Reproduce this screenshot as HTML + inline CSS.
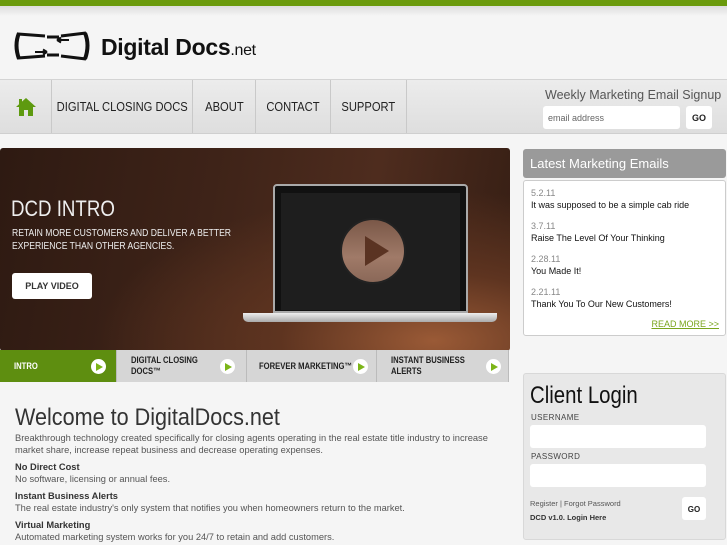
<!DOCTYPE html>
<html><head><meta charset="utf-8"><style>
*{margin:0;padding:0;box-sizing:border-box}
body{width:727px;height:545px;overflow:hidden;background:#f5f5f5;font-family:"Liberation Sans",sans-serif;position:relative}
.a{position:absolute}
.nav{top:79px;left:0;width:727px;height:55px;background:linear-gradient(#ececec,#dedede);border-top:1px solid #d4d4d4;border-bottom:1px solid #cfcfcf}
.nav .c{position:absolute;top:0;height:53px;border-right:1px solid #c9c9c9;font-size:13px;color:#222;display:flex;align-items:center;justify-content:center;white-space:nowrap}
.nav .c span{display:block;transform:scaleX(.86)}
.tab{top:350px;height:32px;background:#d6d6d6;border-right:1px solid #bbb;color:#222;padding:0 0 0 14px;display:flex;align-items:center}
.tab b{display:block;font-size:9px;line-height:11px;transform:scaleX(.85);transform-origin:left;white-space:nowrap}
.pl{position:absolute;top:9px;width:15px;height:15px;border-radius:50%;background:#fff}
.pl:after{content:"";position:absolute;left:5px;top:3.5px;border-left:7px solid #7cb518;border-top:4px solid transparent;border-bottom:4px solid transparent}
.sm{font-size:9px;color:#111}
.dt{font-size:9px;color:#888}
.in{background:#fff;border-radius:3px}
</style></head><body>
<div class="a" style="top:0;left:0;width:727px;height:6px;background:#6a9a0c"></div>
<div class="a" style="top:6px;left:0;width:727px;height:10px;background:linear-gradient(#ddd,#f5f5f5)"></div>
<svg class="a" style="left:13px;top:30px" width="78" height="32" viewBox="0 0 78 32"><path d="M6 3 Q1 15 6 29" stroke="#111" stroke-width="4" fill="none"/><path d="M72 3 Q77 15 72 29" stroke="#111" stroke-width="4" fill="none"/><path d="M5 4 L32 6 M34 7 L46 7 M48 6 L73 3 M5 28 L32 26 M34 25 L46 25 M48 26 L73 29" stroke="#111" stroke-width="3" fill="none"/><path d="M44 10 L56 10 M44 10 L48 7.5 M44 10 L48 12.5 M22 22 L34 22 M34 22 L30 19.5 M34 22 L30 24.5" stroke="#111" stroke-width="2" fill="none"/></svg>
<div class="a" style="left:101px;top:34px;font-size:23px;font-weight:bold;color:#111;letter-spacing:-.3px">Digital Docs<span style="font-size:16px;font-weight:normal">.net</span></div>
<div class="a nav">
<div class="c" style="left:0;width:52px"><svg width="20" height="18" viewBox="0 0 20 18"><path d="M10 0 L20 9 L17 9 L17 18 L12 18 L12 12 L8 12 L8 18 L3 18 L3 9 L0 9 Z M3 1 L6 1 L6 4 L3 7Z" fill="#5e9a10"/></svg></div>
<div class="c" style="left:52px;width:141px"><span>DIGITAL CLOSING DOCS</span></div>
<div class="c" style="left:193px;width:63px"><span>ABOUT</span></div>
<div class="c" style="left:256px;width:75px"><span>CONTACT</span></div>
<div class="c" style="left:331px;width:76px"><span>SUPPORT</span></div>
</div>
<div class="a" style="left:545px;top:88px;font-size:12.5px;color:#555">Weekly Marketing Email Signup</div>
<div class="a in" style="left:543px;top:106px;width:137px;height:23px;font-size:9px;color:#666;padding:7px 0 0 5px">email address</div>
<div class="a in" style="left:686px;top:106px;width:26px;height:23px;font-size:9px;font-weight:bold;color:#222;text-align:center;padding-top:7px">GO</div>
<div class="a" style="left:0;top:148px;width:510px;height:203px;border-radius:3px;background:radial-gradient(ellipse at 85% 95%,#9a5a36 0%,#5e3420 25%,transparent 55%),linear-gradient(100deg,#2e1a12,#3e2318 40%,#4e2c1e 70%,#351e14);overflow:hidden">
<div class="a" style="left:273px;top:36px;width:195px;height:129px;background:#111;border:2px solid #aaa;border-radius:4px 4px 0 0"></div>
<div class="a" style="left:281px;top:45px;width:179px;height:117px;background:#1e1e1e"></div>
<div class="a" style="left:340px;top:70px;width:66px;height:66px;border-radius:50%;background:linear-gradient(#7a5848,#a07a68 60%,#8a6858);border:2px solid #222"></div>
<div class="a" style="left:365px;top:88px;border-left:24px solid #5a3322;border-top:15px solid transparent;border-bottom:15px solid transparent"></div>
<div class="a" style="left:243px;top:165px;width:254px;height:9px;background:linear-gradient(#eee,#aaa);border-radius:0 0 5px 5px"></div>
<div class="a" style="left:11px;top:48px;font-size:22px;color:#eee;transform:scaleX(.85);transform-origin:left">DCD INTRO</div>
<div class="a" style="left:12px;top:79px;font-size:10px;line-height:13px;color:#eee;transform:scaleX(.86);transform-origin:left;width:260px">RETAIN MORE CUSTOMERS AND DELIVER A BETTER EXPERIENCE THAN OTHER AGENCIES.</div>
<div class="a" style="left:12px;top:125px;width:80px;height:26px;background:#fff;border-radius:3px;font-size:9px;font-weight:bold;color:#333;text-align:center;padding-top:8px">PLAY VIDEO</div>
</div>
<div class="a tab" style="left:0;width:117px;background:#5e8e10;color:#fff"><b>INTRO</b><div class="pl" style="left:91px"></div></div>
<div class="a tab" style="left:117px;width:130px"><b>DIGITAL CLOSING<br>DOCS™</b><div class="pl" style="left:103px"></div></div>
<div class="a tab" style="left:247px;width:130px;padding-left:12px"><b>FOREVER MARKETING™</b><div class="pl" style="left:106px"></div></div>
<div class="a tab" style="left:377px;width:132px"><b>INSTANT BUSINESS<br>ALERTS</b><div class="pl" style="left:109px"></div></div>
<div class="a" style="left:15px;top:404px;font-size:24px;color:#333;transform:scaleX(.9);transform-origin:left;white-space:nowrap">Welcome to DigitalDocs.net</div>
<div class="a" style="left:15px;top:433px;width:490px;font-size:9.3px;line-height:11.5px;color:#555">Breakthrough technology created specifically for closing agents operating in the real estate title industry to increase market share, increase repeat business and decrease operating expenses.
<div style="margin-top:6px;font-weight:bold;color:#333">No Direct Cost</div><div>No software, licensing or annual fees.</div>
<div style="margin-top:6px;font-weight:bold;color:#333">Instant Business Alerts</div><div>The real estate industry's only system that notifies you when homeowners return to the market.</div>
<div style="margin-top:6px;font-weight:bold;color:#333">Virtual Marketing</div><div>Automated marketing system works for you 24/7 to retain and add customers.</div></div>
<div class="a" style="left:523px;top:149px;width:203px;height:29px;background:#9a9a9a;border-radius:3px;color:#fff;font-size:13px;padding:7px 0 0 7px">Latest Marketing Emails</div>
<div class="a" style="left:523px;top:180px;width:203px;height:156px;background:#fff;border:1px solid #ccc;border-radius:3px;padding:6px 0 0 7px;line-height:12px">
<div class="dt">5.2.11</div><div class="sm">It was supposed to be a simple cab ride</div>
<div class="dt" style="margin-top:9px">3.7.11</div><div class="sm">Raise The Level Of Your Thinking</div>
<div class="dt" style="margin-top:9px">2.28.11</div><div class="sm">You Made It!</div>
<div class="dt" style="margin-top:9px">2.21.11</div><div class="sm">Thank You To Our New Customers!</div>
<div style="position:absolute;right:6px;top:137px;font-size:9px;color:#7aa51c;text-decoration:underline">READ MORE &gt;&gt;</div></div>
<div class="a" style="left:523px;top:373px;width:203px;height:167px;background:#e8e8e8;border:1px solid #d8d8d8;border-radius:3px">
<div class="a" style="left:6px;top:8px;font-size:24px;color:#111;transform:scaleX(.85);transform-origin:left;white-space:nowrap">Client Login</div>
<div class="a" style="left:7px;top:39px;font-size:8px;color:#444;letter-spacing:.4px">USERNAME</div>
<div class="a in" style="left:6px;top:51px;width:176px;height:23px"></div>
<div class="a" style="left:7px;top:78px;font-size:8px;color:#444;letter-spacing:.4px">PASSWORD</div>
<div class="a in" style="left:6px;top:90px;width:176px;height:23px"></div>
<div class="a" style="left:6px;top:125px;font-size:7.5px;color:#555">Register | Forgot Password</div>
<div class="a" style="left:6px;top:139px;font-size:7.5px;color:#333;font-weight:bold">DCD v1.0. Login Here</div>
<div class="a in" style="left:158px;top:123px;width:24px;height:23px;font-size:8px;font-weight:bold;text-align:center;padding-top:8px;color:#222">GO</div>
</div>
</body></html>
